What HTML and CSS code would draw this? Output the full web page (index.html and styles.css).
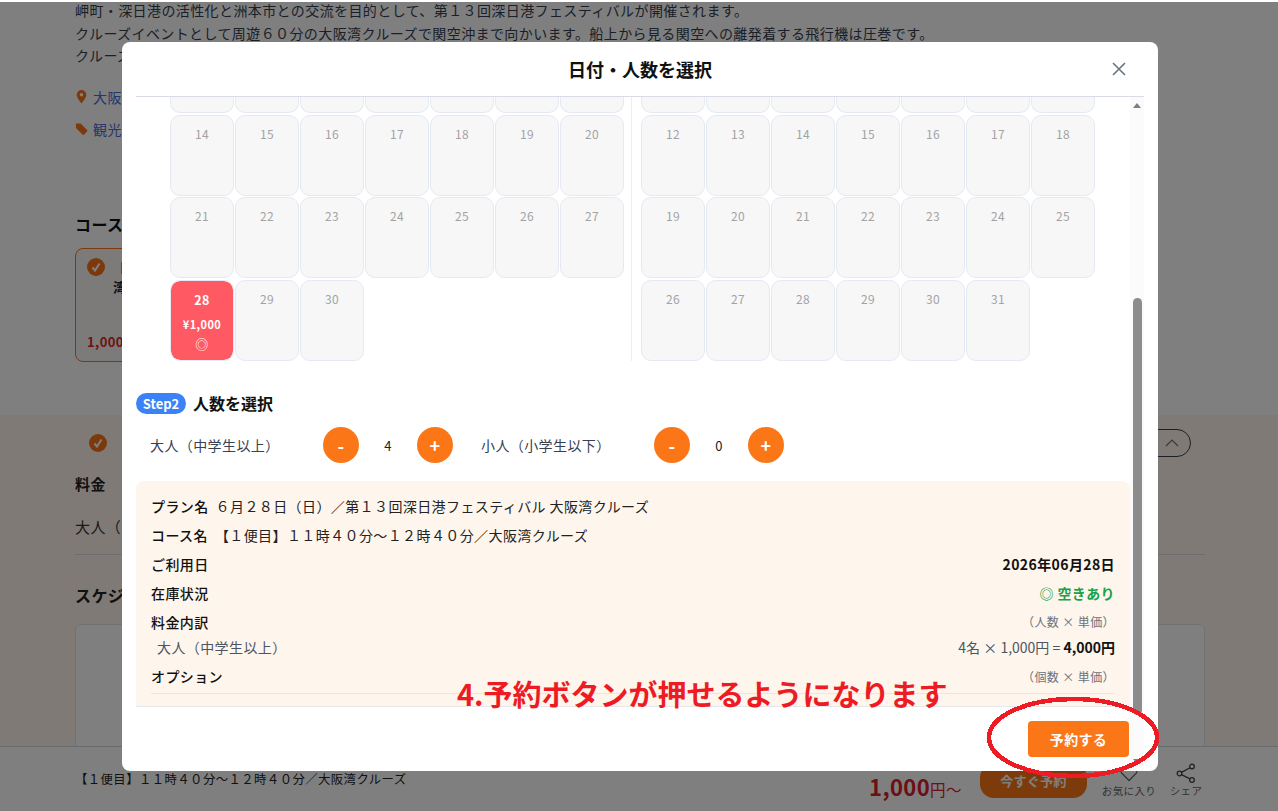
FILE: index.html
```html
<!DOCTYPE html>
<html lang="ja">
<head>
    <meta charset="UTF-8">
    <meta name="viewport" content="width=device-width, initial-scale=1.0">
    <title>日付・人数を選択</title>
    <link rel="stylesheet" href="styles.css">
</head>
<body>
    <div class="page">
        <div class="page-main">
            <div class="intro">
                <p>岬町・深日港の活性化と洲本市との交流を目的として、第１３回深日港フェスティバルが開催されます。</p>
                <p>クルーズイベントとして周遊６０分の大阪湾クルーズで関空沖まで向かいます。船上から見る関空への離発着する飛行機は圧巻です。</p>
                <p>クルーズ</p>
            </div>
            <div class="meta-row meta-first">
                <svg class="meta-icon" viewBox="0 0 12 14"><path fill="#f97316" fill-rule="evenodd" d="M6 0a4.8 4.8 0 0 0-4.8 4.8C1.200 8 6 13.500 6 13.500S10.800 8 10.800 4.800A4.800 4.800 0 0 0 6 0zm0 6.600a1.800 1.800 0 1 1 0-3.600 1.800 1.800 0 0 1 0 3.600z"/></svg>
                <a class="meta-link">大阪</a>
            </div>
            <div class="meta-row">
                <svg class="meta-icon" viewBox="0 0 14 14"><path fill="#f97316" d="M1 1h5l7 7a1.300 1.300 0 0 1 0 1.800L9.800 13a1.300 1.300 0 0 1-1.800 0L1 6z"/></svg>
                <a class="meta-link">観光</a>
            </div>
            <h3 class="course-title">コース</h3>
            <div class="course-card">
                <svg class="check-icon" viewBox="0 0 18 18"><circle cx="9" cy="9" r="9" fill="#f97316"/><path d="M5.500 9.500l2.500 3 4.500-7" fill="none" stroke="#fff" stroke-width="2"/></svg>
                <div class="course-text">【<br>湾</div>
                <div class="course-price">1,000円</div>
            </div>
            <div class="band">
                <div class="band-head">
                    <svg class="check-icon" viewBox="0 0 18 18"><circle cx="9" cy="9" r="9" fill="#f97316"/><path d="M5.500 9.500l2.500 3 4.500-7" fill="none" stroke="#fff" stroke-width="2"/></svg>
                    <div class="close-pill">
                        <svg class="chevron" viewBox="0 0 14 8"><path d="M1 7l6-6 6 6" fill="none" stroke="#6b7280" stroke-width="1.200"/></svg>
                    </div>
                </div>
                <h4 class="band-title">料金</h4>
                <div class="band-price">大人（</div>
                <h3 class="band-heading">スケジ</h3>
                <div class="schedule-box"></div>
            </div>
        </div>
        <div class="bottom-bar">
            <div class="bar-course">【１便目】１１時４０分～１２時４０分／大阪湾クルーズ</div>
            <div class="bar-price"><b>1,000</b>円～</div>
            <button class="bar-btn">今すぐ予約</button>
            <div class="bar-action bar-fav">
                <svg class="bar-icon" viewBox="0 0 24 24"><path d="M12 21L3 12a5.500 5.500 0 0 1 9-6 5.500 5.500 0 0 1 9 6z" fill="none" stroke="#666" stroke-width="1.500"/></svg>
                <span>お気に入り</span>
            </div>
            <div class="bar-action bar-share">
                <svg class="bar-icon" viewBox="0 0 20 20"><g fill="none" stroke="#444" stroke-width="1.300"><circle cx="16" cy="3.500" r="2.300"/><circle cx="3.500" cy="10.500" r="2.300"/><circle cx="16" cy="17" r="2.300"/><path d="M14 4.700L5.500 9.400M5.500 11.700L14 15.800"/></g></svg>
                <span>シェア</span>
            </div>
        </div>
    </div>

    <div class="overlay"></div>

    <div class="modal">
        <div class="modal-header">
            <h2>日付・人数を選択</h2>
            <svg class="modal-close" viewBox="0 0 14 14"><path d="M1 1l12 12M13 1L1 13" fill="none" stroke="#6b7280" stroke-width="1.600"/></svg>
        </div>
        <div class="modal-body">
            <div class="calendars">
                <div class="month">
                    <div class="day cut"></div><div class="day cut"></div><div class="day cut"></div><div class="day cut"></div><div class="day cut"></div><div class="day cut"></div><div class="day cut"></div>
                    <div class="day">14</div><div class="day">15</div><div class="day">16</div><div class="day">17</div><div class="day">18</div><div class="day">19</div><div class="day">20</div>
                    <div class="day">21</div><div class="day">22</div><div class="day">23</div><div class="day">24</div><div class="day">25</div><div class="day">26</div><div class="day">27</div>
                    <div class="day selected">
                        <span class="day-num">28</span>
                        <span class="day-price">¥1,000</span>
                        <span class="day-stock">◎</span>
                    </div>
                    <div class="day">29</div><div class="day">30</div>
                </div>
                <div class="month month-right">
                    <div class="day cut"></div><div class="day cut"></div><div class="day cut"></div><div class="day cut"></div><div class="day cut"></div><div class="day cut"></div><div class="day cut"></div>
                    <div class="day">12</div><div class="day">13</div><div class="day">14</div><div class="day">15</div><div class="day">16</div><div class="day">17</div><div class="day">18</div>
                    <div class="day">19</div><div class="day">20</div><div class="day">21</div><div class="day">22</div><div class="day">23</div><div class="day">24</div><div class="day">25</div>
                    <div class="day">26</div><div class="day">27</div><div class="day">28</div><div class="day">29</div><div class="day">30</div><div class="day">31</div>
                </div>
            </div>

            <div class="step-title">
                <span class="step-pill">Step2</span>
                <span>人数を選択</span>
            </div>

            <div class="counters">
                <span class="counter-label">大人（中学生以上）</span>
                <button class="round-btn">-</button>
                <span class="counter-num">4</span>
                <button class="round-btn">+</button>
                <span class="counter-label counter-second">小人（小学生以下）</span>
                <button class="round-btn">-</button>
                <span class="counter-num">0</span>
                <button class="round-btn">+</button>
            </div>

            <div class="summary">
                <div class="sum-row"><b>プラン名</b><span>６月２８日（日）／第１３回深日港フェスティバル 大阪湾クルーズ</span></div>
                <div class="sum-row"><b>コース名</b><span>【１便目】１１時４０分～１２時４０分／大阪湾クルーズ</span></div>
                <div class="sum-row sum-between"><b>ご利用日</b><strong>2026年06月28日</strong></div>
                <div class="sum-row sum-between"><b>在庫状況</b><strong class="stock-ok">◎ 空きあり</strong></div>
                <div class="sum-row sum-between"><b>料金内訳</b><small>（人数 × 単価）</small></div>
                <div class="sum-sub"><span>大人（中学生以上）</span><span class="sum-calc">4名 × 1,000円 = <strong>4,000円</strong></span></div>
                <div class="sum-row sum-between sum-last"><b>オプション</b><small>（個数 × 単価）</small></div>
            </div>
        </div>
        <div class="modal-footer">
            <button class="reserve-btn">予約する</button>
        </div>
        <div class="scrollbar">
            <span class="scroll-up"></span>
            <span class="scroll-thumb"></span>
            <span class="scroll-down"></span>
        </div>
    </div>

    <div class="note">4.予約ボタンが押せるようになります</div>
    <svg class="note-ring" viewBox="0 0 176 85"><ellipse cx="86" cy="41.500" rx="84" ry="38.500" fill="none" stroke="#ed1c24" stroke-width="4.500" shape-rendering="crispEdges"/></svg>
</body>
</html>
```

FILE: styles.css
```css
* {
    margin: 0;
    padding: 0;
    box-sizing: border-box;
    font-family: "Noto Sans CJK JP", "Noto Sans", sans-serif;
}

body {
    width: 1278px;
    height: 811px;
    overflow: hidden;
    position: relative;
    background: #fff;
    color: #333;
    letter-spacing: 0.025em;
}

button {
    border: none;
    cursor: pointer;
    letter-spacing: 0.025em;
}

/* page behind the dialog */
.page {
    height: 811px;
    display: flex;
    flex-direction: column;
    overflow: hidden;
}

.page-main {
    flex: 1;
    overflow: hidden;
    min-height: 0;
}

.intro {
    margin-top: -1px;
    padding-left: 75px;
    font-size: 14px;
    line-height: 22.500px;
    color: #374151;
}

.meta-row {
    display: flex;
    align-items: center;
    gap: 5px;
    height: 22px;
    margin: 10px 0 0 75px;
    font-size: 14px;
}

.meta-first {
    margin-top: 19px;
}

.meta-icon {
    width: 13px;
    height: 14px;
}

.meta-link {
    color: #4f6bd8;
}

.course-title {
    margin: 72px 0 0 75px;
    font-size: 16px;
    line-height: 24px;
    color: #111;
}

.course-card {
    position: relative;
    width: 300px;
    height: 114px;
    margin: 12px 0 0 75px;
    border: 1px solid #f97316;
    border-radius: 8px;
    background: #faf7f4;
}

.course-card .check-icon {
    margin: 9px 0 0 11px;
}

.course-text {
    position: absolute;
    top: 9px;
    left: 37px;
    font-size: 13px;
    font-weight: 700;
    line-height: 19px;
    color: #222;
}

.course-price {
    position: absolute;
    left: 11px;
    bottom: 10px;
    font-size: 13px;
    font-weight: 700;
    color: #dc2626;
}

.check-icon {
    width: 18px;
    height: 18px;
    display: block;
}

.band {
    height: 331px;
    margin-top: 53px;
    padding: 14px 73px 0 75px;
    background: #fff5ec;
    overflow: hidden;
}

.band-head {
    display: flex;
    justify-content: space-between;
    align-items: center;
    height: 28px;
    padding-left: 14px;
}

.close-pill {
    width: 80px;
    height: 28px;
    margin-right: 14px;
    border: 1px solid #374151;
    border-radius: 14px;
    display: flex;
    justify-content: flex-end;
    align-items: center;
    padding-right: 11px;
}

.chevron {
    width: 14px;
    height: 8px;
}

.band-title {
    margin-top: 15px;
    font-size: 15px;
    line-height: 24px;
    color: #222;
}

.band-price {
    margin-top: 19px;
    padding-bottom: 15px;
    width: 1130px;
    border-bottom: 1px solid #d8dde6;
    font-size: 15px;
    line-height: 24px;
}

.band-heading {
    margin-top: 28px;
    font-size: 16px;
    line-height: 24px;
    color: #222;
}

.schedule-box {
    width: 1130px;
    height: 200px;
    margin-top: 17px;
    border: 1px solid #e2e5ea;
    border-radius: 6px;
    background: #fff;
}

.bottom-bar {
    flex: none;
    height: 65px;
    display: flex;
    align-items: center;
    padding-left: 75px;
    border-top: 1px solid #d5d7da;
    background: #fff;
}

.bar-course {
    width: 794px;
    font-size: 12.400px;
    color: #222;
}

.bar-price {
    width: 111px;
    margin-top: 13px;
    font-size: 15.500px;
    color: #d6202a;
}

.bar-price b {
    font-size: 22px;
}

.bar-btn {
    width: 107px;
    height: 34px;
    margin-top: 3px;
    border-radius: 14px;
    background: #fb7616;
    color: #fff;
    font-size: 13px;
    font-weight: 700;
}

.bar-action {
    display: flex;
    flex-direction: column;
    align-items: center;
    width: 46px;
    margin-top: 2px;
    margin-left: 12px;
    font-size: 10.500px;
    line-height: 14px;
    color: #666;
}

.bar-fav {
    width: 60px;
    margin-left: 12px;
}

.bar-share {
    margin-left: 4px;
}

.bar-icon {
    width: 20px;
    height: 20px;
    margin-bottom: 1px;
}

.overlay {
    position: absolute;
    top: 2px;
    left: 0;
    right: 0;
    bottom: 0;
    background: rgba(0, 0, 0, 0.5);
}

/* dialog */
.modal {
    position: absolute;
    top: 42px;
    left: 122px;
    width: 1036px;
    height: 729px;
    display: flex;
    flex-direction: column;
    padding: 0 14px;
    background: #fff;
    border-radius: 8px;
    overflow: hidden;
}

.modal-header {
    position: relative;
    flex: none;
    height: 55px;
    display: flex;
    justify-content: center;
    align-items: center;
    border-bottom: 1px solid #d9dce8;
}

.modal-header h2 {
    font-size: 18px;
    letter-spacing: 0;
    color: #111;
}

.modal-close {
    position: absolute;
    right: 18px;
    top: 20px;
    width: 14px;
    height: 14px;
}

.modal-body {
    flex: 1;
    width: 994px;
    overflow: hidden;
    min-height: 0;
}

.calendars {
    display: flex;
    padding-left: 34px;
}

.month {
    display: grid;
    grid-template-columns: repeat(7, 64px);
    grid-template-rows: 16.250px;
    grid-auto-rows: 81px;
    gap: 1.500px 1px;
    width: 462px;
    height: 264px;
    border-right: 1px solid #eceef3;
}

.month-right {
    width: 454px;
    margin-left: 9px;
    border-right: none;
}

.day {
    display: flex;
    flex-direction: column;
    align-items: center;
    padding-top: 8px;
    border: 1px solid #e4e9f2;
    border-radius: 10px;
    background: #f7f7f8;
    font-size: 12px;
    line-height: 20px;
    color: #a3a3a3;
}

.day.cut {
    padding: 0;
    border-top: none;
    border-radius: 0 0 10px 10px;
}

.day.selected {
    padding-top: 9px;
    background: #ff5a63;
    background-clip: padding-box;
    color: #fff;
    font-weight: 700;
}

.day-num {
    font-size: 12.500px;
}

.day-price {
    margin-top: 7px;
    font-size: 11px;
    line-height: 14px;
}

.day-stock {
    margin-top: 4px;
    font-size: 13px;
    font-weight: 400;
    line-height: 18px;
}

.step-title {
    display: flex;
    align-items: center;
    gap: 7px;
    height: 22px;
    margin-top: 31px;
    font-size: 16px;
    font-weight: 700;
    letter-spacing: 0;
    color: #111;
}

.step-pill {
    width: 50px;
    height: 21px;
    border-radius: 11px;
    background: #3b82f6;
    color: #fff;
    font-size: 13px;
    line-height: 21px;
    text-align: center;
}

.counters {
    display: flex;
    align-items: center;
    height: 36px;
    margin-top: 13px;
    padding-left: 14px;
    font-size: 14px;
    color: #374151;
}

.counter-label {
    width: 173px;
}

.counter-second {
    margin-left: 28px;
}

.counter-num {
    width: 58px;
    text-align: center;
    font-size: 13px;
    color: #222;
}

.round-btn {
    width: 36px;
    height: 36px;
    border-radius: 50%;
    background: #fb7616;
    color: #fff;
    font-size: 18px;
    font-weight: 700;
    line-height: 34px;
}

.summary {
    margin-top: 18px;
    height: 240px;
    padding: 10px 15px 0 15px;
    background: #fef5ec;
    border-radius: 8px 8px 0 0;
    font-size: 14px;
    color: #222;
}

.sum-row {
    display: flex;
    align-items: center;
    gap: 7px;
    height: 29px;
}

.sum-row b {
    font-weight: 500;
    color: #111;
}

.sum-between {
    justify-content: space-between;
}

.sum-row small {
    font-size: 12px;
    color: #6b7280;
}

.sum-row strong {
    font-weight: 700;
    color: #111;
}

.sum-row .stock-ok {
    color: #16a34a;
}

.sum-sub {
    display: flex;
    justify-content: space-between;
    height: 23px;
    padding-left: 6px;
    line-height: 23px;
    color: #4b5563;
}

.sum-sub strong {
    color: #111;
}

.sum-calc {
    letter-spacing: 0;
}

.sum-last {
    height: 35px;
    border-bottom: 1px solid #e5e7eb;
}

.modal-footer {
    flex: none;
    width: 994px;
    height: 65px;
    display: flex;
    justify-content: flex-end;
    padding: 14px 1px 0 0;
    border-top: 1px solid #e5e7eb;
}

.reserve-btn {
    width: 101px;
    height: 36px;
    border-radius: 4px;
    background: #fb7616;
    color: #fff;
    font-size: 14px;
    font-weight: 700;
}

.scrollbar {
    position: absolute;
    top: 55px;
    right: 14px;
    bottom: 0;
    width: 14px;
    background: #fbfbfb;
}

.scroll-up,
.scroll-down {
    position: absolute;
    left: 3px;
    border-left: 4px solid transparent;
    border-right: 4px solid transparent;
}

.scroll-up {
    top: 6px;
    border-bottom: 5px solid #7f7f7f;
}

.scroll-down {
    bottom: 7px;
    border-top: 5px solid #7f7f7f;
}

.scroll-thumb {
    position: absolute;
    top: 201px;
    left: 3px;
    width: 9px;
    height: 417px;
    border-radius: 5px;
    background: #8c8c8c;
}

/* red note drawn on top of the screenshot */
.note {
    position: absolute;
    top: 672px;
    left: 457px;
    font-size: 29px;
    font-weight: 700;
    line-height: 42px;
    letter-spacing: 0;
    color: #ed1c24;
    white-space: nowrap;
}

.note-ring {
    position: absolute;
    top: 696px;
    left: 987px;
    width: 176px;
    height: 85px;
}
```
